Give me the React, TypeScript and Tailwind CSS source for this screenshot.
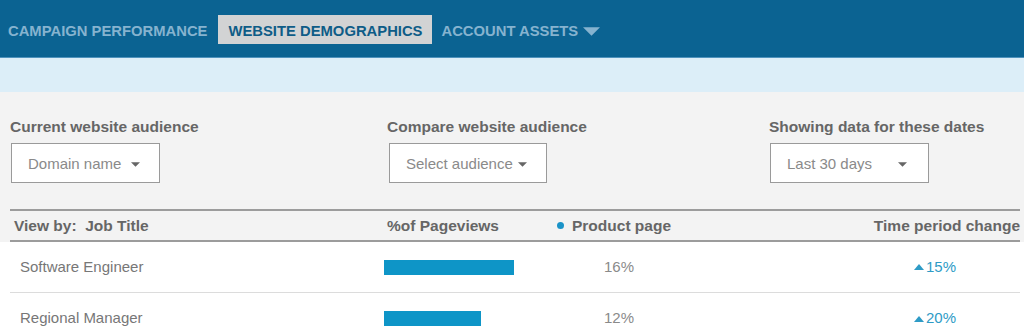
import { ReactNode } from "react";

const font = { fontFamily: '"Liberation Sans", Arial, sans-serif' };

function Caret({ className }: { className: string }) {
  return (
    <svg viewBox="0 0 10 5" className={className}>
      <path d="M0 0 L10 0 L5 5 Z" fill="currentColor" />
    </svg>
  );
}

function Select({ label, width, gap }: { label: string; width: string; gap: string }) {
  return (
    <div
      className={`flex items-center h-[40px] ${width} border-[1.5px] border-[#9a9a9a] bg-white pl-[16px] pt-[2px] text-[15px] text-[#8a8a8a] ${gap}`}
    >
      <span>{label}</span>
      <Caret className="w-[9px] h-[5px] text-[#666]" />
    </div>
  );
}

function Filter({ title, children }: { title: string; children: ReactNode }) {
  return (
    <div className="flex flex-col gap-[6px]">
      <div className="text-[15.5px] font-bold text-[#666] leading-[20px]">{title}</div>
      {children}
    </div>
  );
}

function Up() {
  return (
    <svg viewBox="0 0 10 6" className="w-[10px] h-[6px] mr-[2px]">
      <path d="M0 6 L5 0 L10 6 Z" fill="#2e9bc6" />
    </svg>
  );
}

const rows = [
  { title: "Software Engineer", bar: 130, pct: "16%", change: "15%" },
  { title: "Regional Manager", bar: 97, pct: "12%", change: "20%" },
];

export default function App() {
  return (
    <div className="w-[1024px] h-[335px] overflow-hidden bg-white" style={font}>
      {/* top nav */}
      <div className="h-[58px] pt-[2px] bg-[#0b6392] border-b border-[#4f93bd] flex items-center pl-[8px] text-[14.8px] font-bold">
        <span className="text-[#86b3cf] mr-[11px] pt-[3px]">CAMPAIGN PERFORMANCE</span>
        <span className="h-[29px] w-[214px] pt-[3px] bg-[#d2d3d4] text-[#0e5c87] flex items-center justify-center">
          WEBSITE DEMOGRAPHICS
        </span>
        <span className="text-[#86b3cf] ml-[9px] pt-[3px] flex items-center gap-[5px]">
          ACCOUNT ASSETS
          <Caret className="w-[17px] h-[9px] text-[#86b3cf]" />
        </span>
      </div>
      <div className="h-[34px] bg-[#dceef8]" />

      {/* filters */}
      <div className="bg-[#f3f3f3] pt-[25px] pb-[26px] flex">
        <div className="w-[387px] pl-[10px]">
          <Filter title="Current website audience">
            <div className="pl-[1px]">
              <Select label="Domain name" width="w-[149px]" gap="gap-[10px]" />
            </div>
          </Filter>
        </div>
        <div className="w-[382px]">
          <Filter title="Compare website audience">
            <div className="pl-[2px]">
              <Select label="Select audience" width="w-[158px]" gap="gap-[5px]" />
            </div>
          </Filter>
        </div>
        <div>
          <Filter title="Showing data for these dates">
            <div className="pl-[1px]">
              <Select label="Last 30 days" width="w-[159px]" gap="gap-[26px]" />
            </div>
          </Filter>
        </div>
      </div>

      {/* table */}
      <div className="bg-[#f3f3f3] pl-[10px]">
        <div className="w-[1010px] flex items-center h-[33px] border-y-2 border-[#9c9c9c] text-[15.5px] font-bold text-[#666]">
          <div className="w-[377px] pl-[4px]">View by:&nbsp; Job Title</div>
          <div className="w-[170px]">%of Pageviews</div>
          <div className="w-[200px] flex items-center gap-[8px]">
            <span className="w-[7px] h-[7px] rounded-full bg-[#1a93c8]" />
            Product page
          </div>
          <div className="flex-1 text-right">Time period change</div>
        </div>
      </div>
      <div className="pl-[10px]">
        {rows.map((r, i) => (
          <div
            key={r.title}
            className={`w-[1010px] flex items-center h-[51px] text-[15px] text-[#777] ${i === 0 ? "border-b border-[#dcdcdc]" : ""}`}
          >
            <div className="w-[374px] pl-[10px]">{r.title}</div>
            <div className="w-[173px]">
              <div className="h-[15px] bg-[#0e95c7]" style={{ width: r.bar }} />
            </div>
            <div className="w-[200px] pl-[47px] text-[#8a8a8a]">{r.pct}</div>
            <div className="flex-1 pl-[157px] flex items-center text-[#2e9bc6]">
              <Up />
              {r.change}
            </div>
          </div>
        ))}
      </div>
    </div>
  );
}
